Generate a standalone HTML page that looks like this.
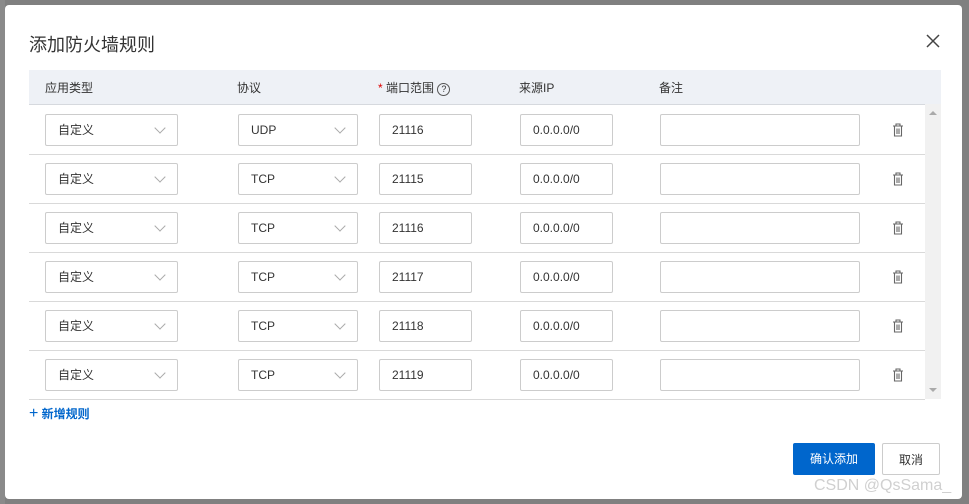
<html><head><style>
body{margin:0;width:969px;height:504px;background:#808080;font-family:"Liberation Sans","Noto Sans CJK SC",sans-serif;position:relative;overflow:hidden}
.dlg{position:absolute;left:5px;top:5px;width:957px;height:494px;background:#fff;border-radius:4px}
.a{position:absolute}
.t{font-size:18px;color:#333;left:29px;top:31px}
.hd{left:29px;top:70px;width:912px;height:34px;background:#eef1f6;border-bottom:1px solid #d6d9de}
.hd span{position:absolute;top:9px;font-size:12px;color:#333}
.line{left:29px;width:896px;height:1px;background:#d9d9d9}
.in{position:absolute;border:1px solid #ccc;border-radius:2px;font-size:12px;color:#333;line-height:30px;padding-left:12px;box-sizing:border-box;height:32px}
.chev{position:absolute;right:13px;top:9px;width:7px;height:7px;border-right:1px solid #aaa;border-bottom:1px solid #aaa;transform:rotate(45deg)}
.sb{left:925px;top:104px;width:16px;height:295px;background:#f1f1f1}
.btn{position:absolute;height:32px;font-size:12px;line-height:32px;text-align:center;box-sizing:border-box;border-radius:2px}
</style></head><body>
<div class="a" style="left:0;top:0;width:5px;height:504px;background:#8a8a8a"></div>
<div class="dlg"></div>
<div class="a t">添加防火墙规则</div>
<svg class="a" style="left:926px;top:34px" width="14" height="14"><path d="M1 1L13 13M13 1L1 13" stroke="#444" stroke-width="1.5"/></svg>
<div class="a hd"><span style="left:16px">应用类型</span><span style="left:208px">协议</span><span style="left:349px"><b style="color:#d00;font-weight:normal">*</b> 端口范围 <span style="position:static;display:inline-block;width:11px;height:11px;border:1px solid #555;border-radius:50%;font-size:9px;line-height:11px;text-align:center;vertical-align:0px">?</span></span><span style="left:490px">来源IP</span><span style="left:630px">备注</span></div>
<div class="a sb"><div class="a" style="left:4px;top:7px;border:4px solid transparent;border-bottom:4px solid #aaa;border-top:0"></div><div class="a" style="left:4px;top:284px;border:4px solid transparent;border-top:4px solid #aaa;border-bottom:0"></div></div>
<div id="rows"></div>
<script>
var p=[["UDP","21116"],["TCP","21115"],["TCP","21116"],["TCP","21117"],["TCP","21118"],["TCP","21119"]],h="";
p.forEach(function(r,i){var y=114+i*49;
h+='<div class="in" style="left:45px;top:'+y+'px;width:133px">自定义<i class="chev"></i></div>';
h+='<div class="in" style="left:238px;top:'+y+'px;width:120px">'+r[0]+'<i class="chev"></i></div>';
h+='<div class="in" style="left:379px;top:'+y+'px;width:93px">'+r[1]+'</div>';
h+='<div class="in" style="left:520px;top:'+y+'px;width:93px">0.0.0.0/0</div>';
h+='<div class="in" style="left:660px;top:'+y+'px;width:200px"></div>';
h+='<svg class="a" style="left:892px;top:'+(y+9)+'px" width="12" height="14"><path d="M1 3H11M4 3V1H8V3M2.5 3V13H9.5V3M5 5.5V11M7 5.5V11" stroke="#666" fill="none" stroke-width="1.1"/></svg>';
h+='<div class="a line" style="top:'+(y+40)+'px"></div>';});
document.getElementById("rows").innerHTML=h;
</script>
<div class="a" style="left:29px;top:405px;font-size:12px;color:#0066cc;font-weight:bold"><span style="font-size:16px;font-weight:normal">+</span> 新增规则</div>
<div class="btn" style="left:793px;top:443px;width:82px;background:#0066cc;color:#fff">确认添加</div>
<div class="btn" style="left:882px;top:443px;width:58px;border:1px solid #ccc;color:#333">取消</div>
<div class="a" style="left:814px;top:477px;font-size:16px;color:#d0d0d0">CSDN @QsSama_</div>
</body></html>
